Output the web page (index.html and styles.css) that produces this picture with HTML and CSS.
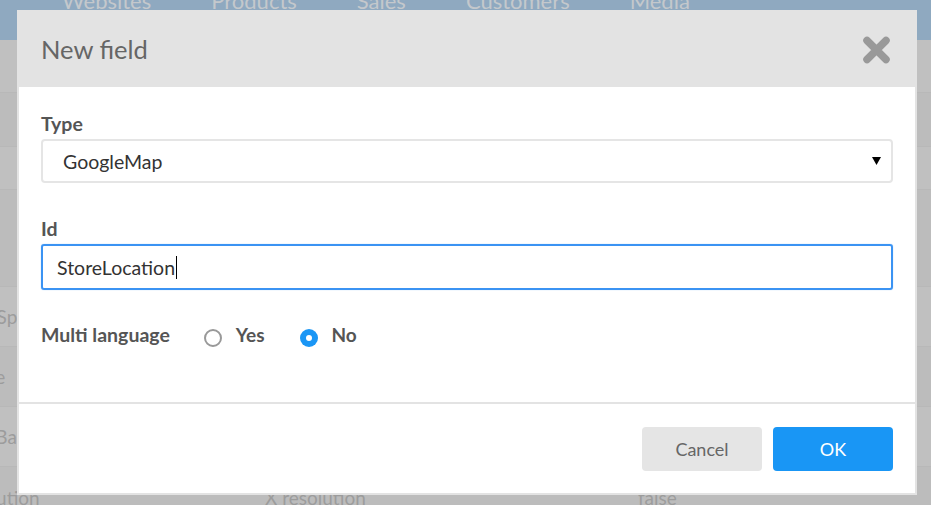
FILE: index.html
```html
<!DOCTYPE html>
<html>
<head>
<meta charset="utf-8">
<link rel="stylesheet" href="styles.css">
</head>
<body>
<div class="app">
  <nav class="topnav">
    <span class="nav-item first">Websites</span>
    <span class="nav-item">Products</span>
    <span class="nav-item">Sales</span>
    <span class="nav-item">Customers</span>
    <span class="nav-item">Media</span>
  </nav>
  <div class="table">
    <div class="row h53"></div>
    <div class="row h54 alt"></div>
    <div class="row h43"></div>
    <div class="row h97 alt"></div>
    <div class="row h60"><span class="c1">Has_Special</span></div>
    <div class="row h60 alt"><span class="c1">Name</span></div>
    <div class="row h60"><span class="c1">Acc_Balance</span></div>
    <div class="row h60 alt"><span class="c1">resolution</span><span class="c2">X resolution</span><span class="c3">false</span></div>
  </div>
</div>

<div class="dialog">
  <div class="dialog-header">
    <h1 class="dialog-title">New field</h1>
    <svg class="close" width="29" height="28" viewBox="0 0 29 28">
      <path d="M5 4.5 L24 23.5 M24 4.5 L5 23.5" stroke="#999" stroke-width="7.5" stroke-linecap="round" fill="none"/>
    </svg>
  </div>
  <div class="dialog-body">
    <div class="form">
      <label class="field-label">Type</label>
      <div class="select">
        <span>GoogleMap</span>
        <svg class="arrow" width="9" height="8" viewBox="0 0 9 8"><path d="M0 0 H9 L4.5 8 Z" fill="#000"/></svg>
      </div>
      <label class="field-label id-label">Id</label>
      <div class="input">StoreLocation<span class="caret"></span></div>
      <div class="radio-row">
        <span class="field-label inline">Multi language</span>
        <span class="opt first-opt"><span class="radio"></span><span class="opt-text">Yes</span></span>
        <span class="opt"><span class="radio checked"></span><span class="opt-text">No</span></span>
      </div>
    </div>
    <div class="footer">
      <button class="btn cancel">Cancel</button>
      <button class="btn ok">OK</button>
    </div>
  </div>
</div>
</body>
</html>
```

FILE: styles.css
```css
html, body {
  margin: 0;
  padding: 0;
  width: 931px;
  height: 505px;
  overflow: hidden;
  background: #bfbfbf;
  font-family: Lato, "Open Sans", sans-serif;
}

.app {
  position: relative;
}

.topnav {
  height: 40px;
  background: #8fa9c0;
  display: flex;
  align-items: flex-start;
  overflow: hidden;
}

.nav-item {
  font-size: 22px;
  line-height: 22px;
  color: #c4c8cc;
  margin-top: -10px;
  margin-right: 60px;
}

.nav-item.first {
  margin-left: 62px;
}

.table {
  display: flex;
  flex-direction: column;
}

.row {
  display: flex;
  align-items: center;
  background: #c0c0c0;
  border-bottom: 1px solid #b8b8b8;
  box-sizing: border-box;
  font-size: 19px;
  color: #9c9c9c;
  white-space: nowrap;
}

.row.alt {
  background: #bcbcbc;
}

.h53 { height: 53px; }
.h54 { height: 54px; }
.h43 { height: 43px; }
.h97 { height: 97px; }
.h60 { height: 60px; }

.c1 {
  margin-left: -44px;
  width: 309px;
}

.c2 {
  width: 373px;
}

.c3 {
  width: 100px;
}

.row:last-child {
  align-items: flex-start;
  padding-top: 19px;
}

.dialog {
  position: absolute;
  left: 17px;
  top: 10px;
  width: 900px;
  height: 485px;
  background: #e3e3e3;
  display: flex;
  flex-direction: column;
}

.dialog-header {
  height: 77px;
  flex: none;
  display: flex;
  align-items: center;
  justify-content: space-between;
  padding: 0 26px 0 24px;
}

.dialog-title {
  margin: 0;
  font-size: 25.5px;
  font-weight: 400;
  color: #666;
}

.close {
  display: block;
  margin-top: 2px;
}

.dialog-body {
  flex: 1;
  margin: 0 2px 2px;
  background: #fff;
  display: flex;
  flex-direction: column;
}

.form {
  flex: 1;
  padding: 27px 22px 0;
  display: flex;
  flex-direction: column;
}

.field-label {
  font-size: 19.5px;
  line-height: 20px;
  font-weight: 700;
  color: #555;
  margin-bottom: 5px;
}

.id-label {
  margin-top: 36px;
}

.select {
  height: 44px;
  box-sizing: border-box;
  border: 2px solid #e5e5e5;
  border-radius: 4px;
  display: flex;
  align-items: center;
  justify-content: space-between;
  padding: 0 10px 0 20px;
  font-size: 19.5px;
  color: #333;
}

.arrow {
  display: block;
}

.input {
  height: 46px;
  box-sizing: border-box;
  border: 2px solid #3b93f3;
  border-radius: 3px;
  box-shadow: 0 0 1px #7bb6f6;
  display: flex;
  align-items: center;
  padding: 0 14px;
  font-size: 19.5px;
  color: #333;
}

.caret {
  display: inline-block;
  width: 1px;
  height: 23px;
  background: #000;
  margin-left: 1px;
}

.radio-row {
  display: flex;
  align-items: center;
  margin-top: 33px;
}

.field-label.inline {
  margin-bottom: 0;
}

.opt {
  display: flex;
  align-items: center;
  margin-left: 35px;
}

.opt.first-opt {
  margin-left: 34px;
}

.opt-text {
  font-size: 19px;
  line-height: 20px;
  font-weight: 700;
  color: #555;
  margin-left: 14px;
}

.radio {
  width: 18px;
  height: 18px;
  box-sizing: border-box;
  border: 2px solid #999;
  border-radius: 50%;
  margin-top: 6px;
  position: relative;
}

.radio.checked {
  border: none;
  background: #1a96f5;
}

.radio.checked::after {
  content: "";
  position: absolute;
  left: 6px;
  top: 6px;
  width: 6px;
  height: 6px;
  border-radius: 50%;
  background: #fff;
}

.footer {
  border-top: 2px solid #e3e3e3;
  padding: 23px 22px 22px;
  display: flex;
  justify-content: flex-end;
  gap: 11px;
}

.btn {
  width: 120px;
  height: 44px;
  border: none;
  border-radius: 4px;
  font-family: Lato, "Open Sans", sans-serif;
  font-size: 18px;
  padding: 0;
}

.btn.cancel {
  background: #e5e5e5;
  color: #666;
}

.btn.ok {
  background: #1996f5;
  color: #fff;
}
```
